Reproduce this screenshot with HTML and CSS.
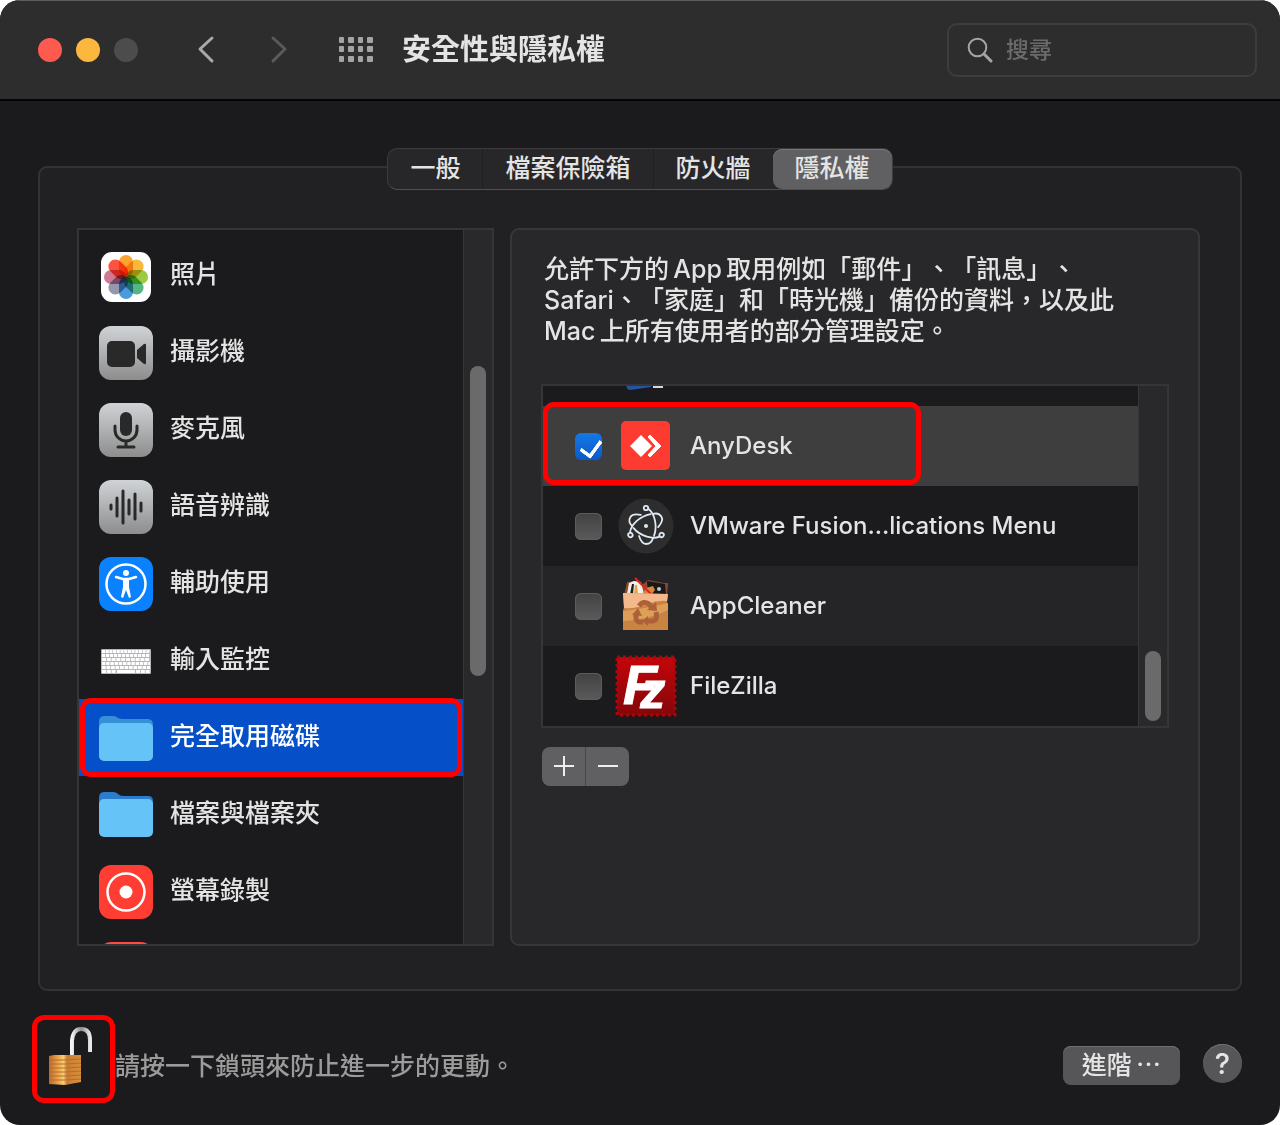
FILE: index.html
```html
<!DOCTYPE html>
<html lang="zh-Hant">
<head>
  <meta charset="UTF-8" />
  <meta name="viewport" content="width=device-width, initial-scale=1.0"/>
  <title>安全性與隱私權</title>
  <link rel="stylesheet" href="styles.css">
</head>
<body>
  <div class="window">
    <header class="titlebar">
      <div class="lights">
        <span class="light red"></span>
        <span class="light yellow"></span>
        <span class="light off"></span>
      </div>
      <div class="nav-buttons">
        <button type="button" class="nav-btn" aria-label="返回">
          <svg width="20" height="30" viewBox="0 0 20 30"><path d="M16 3 L4 14 L16 26" stroke="#a9a9a9"/></svg>
        </button>
        <button type="button" class="nav-btn" aria-label="前進" disabled>
          <svg width="20" height="30" viewBox="0 0 20 30"><path d="M5 3 L17 14 L5 26" stroke="#5a5a5a"/></svg>
        </button>
      </div>
      <button type="button" class="grid-btn" aria-label="顯示全部">
        <svg width="36" height="26" viewBox="0 0 36 26" fill="#a4a4a4">
          <rect x="1" y="0" width="5" height="6" rx="1"/><rect x="10" y="0" width="6" height="6" rx="1"/><rect x="20" y="0" width="5" height="6" rx="1"/><rect x="29" y="0" width="6" height="6" rx="1"/>
          <rect x="1" y="9" width="5" height="6" rx="1"/><rect x="10" y="9" width="6" height="6" rx="1"/><rect x="20" y="9" width="5" height="6" rx="1"/><rect x="29" y="9" width="6" height="6" rx="1"/>
          <rect x="1" y="19" width="5" height="6" rx="1"/><rect x="10" y="19" width="6" height="6" rx="1"/><rect x="20" y="19" width="5" height="6" rx="1"/><rect x="29" y="19" width="6" height="6" rx="1"/>
        </svg>
      </button>
      <h1>安全性與隱私權</h1>
      <label class="search">
        <svg width="26" height="26" viewBox="0 0 26 26" fill="none" stroke="#a5a5a5" stroke-linecap="round">
          <circle cx="10.500" cy="10.500" r="8.800" stroke-width="2"/><path d="M17 17 L24 24" stroke-width="3"/>
        </svg>
        <input type="text" placeholder="搜尋" aria-label="搜尋">
      </label>
    </header>

    <main>
      <div class="tabs">
        <button type="button">一般</button>
        <button type="button">檔案保險箱</button>
        <button type="button">防火牆</button>
        <button type="button" class="active">隱私權</button>
      </div>

      <div class="panel">
        <div class="sidebar">
          <nav class="categories">
            <a href="#photos">
              <svg class="icon" viewBox="0 0 54 54">
                <rect x="2" y="3" width="50" height="50" rx="11" fill="#fff"/>
                <g class="petals">
                  <rect x="20" y="6" width="14" height="22" rx="7" fill="#fba52e"/>
                  <rect x="20" y="6" width="14" height="22" rx="7" fill="#f9b83c" transform="rotate(45 27 28)"/>
                  <rect x="20" y="6" width="14" height="22" rx="7" fill="#9cca40" transform="rotate(90 27 28)"/>
                  <rect x="20" y="6" width="14" height="22" rx="7" fill="#56b583" transform="rotate(135 27 28)"/>
                  <rect x="20" y="6" width="14" height="22" rx="7" fill="#4b9ade" transform="rotate(180 27 28)"/>
                  <rect x="20" y="6" width="14" height="22" rx="7" fill="#9398ae" transform="rotate(225 27 28)"/>
                  <rect x="20" y="6" width="14" height="22" rx="7" fill="#d07895" transform="rotate(270 27 28)"/>
                  <rect x="20" y="6" width="14" height="22" rx="7" fill="#fb5340" transform="rotate(315 27 28)"/>
                </g>
              </svg>
              <span class="name">照片</span>
            </a>
            <a href="#camera">
              <svg class="icon" viewBox="0 0 54 54">
                <defs>
                  <linearGradient id="silver" x1="0" y1="0" x2="0" y2="1">
                    <stop offset="0" stop-color="#d0d3d6"/><stop offset="1" stop-color="#8d8d8d"/>
                  </linearGradient>
                </defs>
                <rect width="54" height="54" rx="12" fill="url(#silver)"/>
                <rect x="8" y="15" width="28" height="26" rx="5" fill="#29292a"/>
                <path d="M38 24 L45 18 Q47 17 47 19 V37 Q47 39 45 38 L38 32 Z" fill="#29292a"/>
              </svg>
              <span class="name">攝影機</span>
            </a>
            <a href="#microphone">
              <svg class="icon" viewBox="0 0 54 54">
                <rect width="54" height="54" rx="12" fill="url(#silver)"/>
                <rect x="21" y="9" width="12" height="24" rx="6" fill="#29292a"/>
                <path d="M16 23 V27 A11 11 0 0 0 38 27 V23 M27 38 V44 M19 44 H35" fill="none" stroke="#29292a" stroke-width="3" stroke-linecap="round"/>
              </svg>
              <span class="name">麥克風</span>
            </a>
            <a href="#speech">
              <svg class="icon" viewBox="0 0 54 54">
                <rect width="54" height="54" rx="12" fill="url(#silver)"/>
                <path d="M12 25 V29 M18 18 V36 M24 11 V43 M30 20 V34 M36 14 V39 M42 23 V31" stroke="#29292a" stroke-width="3" stroke-linecap="round"/>
              </svg>
              <span class="name">語音辨識</span>
            </a>
            <a href="#accessibility">
              <svg class="icon" viewBox="0 0 54 54">
                <rect width="54" height="54" rx="12" fill="#0a82ff"/>
                <circle cx="27" cy="27" r="19.500" fill="none" stroke="#fff" stroke-width="2.500"/>
                <circle cx="27" cy="16" r="3" fill="#fff"/>
                <path d="M17 20 L24 22 H30 L37 20" fill="none" stroke="#fff" stroke-width="2.500" stroke-linecap="round" stroke-linejoin="round"/>
                <path d="M24 22 H30 V30 L32 40 L30 41 L27 33 L24 41 L22 40 L24 30 Z" fill="#fff"/>
              </svg>
              <span class="name">輔助使用</span>
            </a>
            <a href="#input">
              <svg class="icon" viewBox="0 0 54 54">
                <rect x="2" y="15" width="50" height="25" rx="1" fill="#b5b5b5"/>
                <g stroke="#fff" stroke-width="3">
                  <path d="M3 17.500 H51" stroke-dasharray="3 0.700"/>
                  <path d="M3 21.500 H51" stroke-dasharray="3.200 0.800"/>
                  <path d="M3 25.500 H51" stroke-dasharray="4 0.800"/>
                  <path d="M3 29.500 H51" stroke-dasharray="3.400 0.800"/>
                  <path d="M3 33.500 H51" stroke-dasharray="3.700 0.800"/>
                  <path d="M3 37.500 H17 M37 37.500 H51" stroke-dasharray="4 0.800"/>
                  <path d="M18 37.500 H36"/>
                </g>
              </svg>
              <span class="name">輸入監控</span>
            </a>
            <a href="#full-disk" class="selected">
              <svg class="icon" viewBox="0 0 54 54">
                <path d="M0 11 Q0 5 5 5 H14 Q17 5 19 7 Q21 8 24 8 H49 Q54 8 54 14 V20 H0 Z" fill="#3590d6"/>
                <rect y="12" width="54" height="38" rx="5" fill="#65c3f8"/>
              </svg>
              <span class="name">完全取用磁碟</span>
              <span class="mark"></span>
            </a>
            <a href="#files">
              <svg class="icon" viewBox="0 0 54 54">
                <path d="M0 10 Q0 4 5 4 H14 Q17 4 19 6 Q21 8 24 8 H49 Q54 8 54 13 V20 H0 Z" fill="#2a7dcc"/>
                <rect y="11" width="54" height="38" rx="5" fill="#65c3f8"/>
              </svg>
              <span class="name">檔案與檔案夾</span>
            </a>
            <a href="#recording">
              <svg class="icon" viewBox="0 0 54 54">
                <rect width="54" height="54" rx="12" fill="#ff3d33"/>
                <circle cx="27" cy="27" r="18.500" fill="none" stroke="#fff" stroke-width="2.500"/>
                <circle cx="27" cy="27" r="6.500" fill="#fff"/>
              </svg>
              <span class="name">螢幕錄製</span>
            </a>
            <a href="#media" aria-label="媒體">
              <svg class="icon" viewBox="0 0 54 54"><rect width="54" height="54" rx="12" fill="#ff4a45"/></svg>
            </a>
          </nav>
          <div class="track"><div class="thumb"></div></div>
        </div>

        <section class="pane">
          <p>允許下方的&thinsp;App&thinsp;取用例如「郵件」、「訊息」、<br>Safari、「家庭」和「時光機」備份的資料，以及此<br>Mac&thinsp;上所有使用者的部分管理設定。</p>

          <div class="app-box">
            <ul class="apps">
              <li class="plain">
                <svg class="app-icon" viewBox="0 0 62 62">
                  <path d="M11 40 H36 V52 L15 55 Q12 55 11 50 Z" fill="#2355a3"/>
                  <rect x="38" y="50" width="10" height="3" fill="#d8d8d8"/>
                </svg>
              </li>
              <li class="current">
                <input type="checkbox" id="anydesk" checked>
                <label for="anydesk">
                  <svg class="app-icon" viewBox="0 0 62 62">
                    <rect x="6" y="6" width="49" height="49" rx="5" fill="#fe3b30"/>
                    <path d="M15 31 L26 20 L37 31 L26 42 Z" fill="#fff"/>
                    <path d="M33 22 L35 20 L46 31 L35 42 L33 40 L41 31 Z" fill="#fff" stroke="#fff"/>
                  </svg>
                  AnyDesk
                </label>
                <span class="mark"></span>
              </li>
              <li>
                <input type="checkbox" id="vmware">
                <label for="vmware">
                  <svg class="app-icon" viewBox="-31 -31 62 62">
                    <circle r="27.500" fill="#2d2d2e"/>
                    <g fill="none" stroke="#dfe9f2" stroke-width="1.800" stroke-linecap="round">
                      <g id="orbit">
                        <circle cy="-18" r="2.200"/>
                        <path d="M2.500 -17 C8 -13 12 -1 8 10 M-7 10 C-5 16 -2 18 0 18 C3 18 6 16 7 12"/>
                      </g>
                      <use href="#orbit" transform="rotate(120)"/>
                      <use href="#orbit" transform="rotate(240)"/>
                    </g>
                    <circle r="2" fill="#dfe9f2"/>
                  </svg>
                  VMware Fusion...lications Menu
                </label>
              </li>
              <li class="alt">
                <input type="checkbox" id="appcleaner">
                <label for="appcleaner">
                  <svg class="app-icon" viewBox="0 0 62 62">
                    <path d="M9 20 L12 7 L20 6 L27 10 L33 5 L49 8 L53 8 L52 21 Z" fill="#8c4b2c"/>
                    <path d="M14 8 L19 6 L26 7 L29 19 H12 Z" fill="#f1efe9"/>
                    <path d="M15 19 L17 9 L19 9 L18 19 Z" fill="#1f1f22"/>
                    <path d="M32 6 L50 9 L51 19 L33 20 Z" fill="#19191b"/>
                    <path d="M27 20 L31 13 L38 11 L40 15 L36 20 Z" fill="#d6873b"/>
                    <path d="M19 20 L20 10 L22 10 L23 20 Z" fill="#eda13a"/>
                    <path d="M20 3 L37 20" stroke="#d8281f" stroke-width="2"/>
                    <circle cx="44" cy="14" r="2" fill="#bfc7d0"/>
                    <path d="M8 18 L53 19 L52 28 L53 35 V55 H8 V36 L9 32 Z" fill="#c98444"/>
                    <path d="M8 18 L53 19 L52 26 Q42 25 33 29 Q20 34 9 33 Z" fill="#f3b98c"/>
                    <path d="M8 36 Q29 34 53 28 V35 Q33 45 8 46 Z" fill="#dda05b"/>
                    <g fill="none" stroke="#ad6138" stroke-width="5">
                      <path d="M24 31 Q28 25 34 29 L37 33"/>
                      <path d="M41 37 Q43 45 38 46 H32"/>
                      <path d="M28 47 H24 Q19 45 22 38"/>
                    </g>
                    <path d="M32 35 L42 36 L41 27 Z M33 41 V51 L27 46 Z M17 40 L27 41 L23 33 Z" fill="#ad6138"/>
                  </svg>
                  AppCleaner
                </label>
              </li>
              <li>
                <input type="checkbox" id="filezilla">
                <label for="filezilla">
                  <svg class="app-icon stamp" viewBox="0 0 62 62">
                    <defs>
                      <linearGradient id="stamp" x1="0" y1="0" x2="0" y2="1">
                        <stop offset="0" stop-color="#c4060a"/><stop offset="1" stop-color="#84060a"/>
                      </linearGradient>
                    </defs>
                    <rect x="2" y="2" width="58" height="58" fill="url(#stamp)" stroke="#a8080c" stroke-width="3" stroke-dasharray="3 3"/>
                    <text x="8" y="49" font-size="56">F<tspan dx="-17" dy="4" font-size="50">z</tspan></text>
                  </svg>
                  FileZilla
                </label>
              </li>
            </ul>
            <div class="track"><div class="thumb"></div></div>
          </div>

          <div class="add-remove">
            <button type="button" aria-label="加入"><svg width="22" height="22" viewBox="0 0 22 22"><path d="M1 10 H21 M11 0 V20"/></svg></button>
            <button type="button" aria-label="移除"><svg width="22" height="22" viewBox="0 0 22 22"><path d="M1 10 H21"/></svg></button>
          </div>
        </section>
      </div>
    </main>

    <footer>
      <button type="button" class="lock" aria-label="鎖頭">
        <svg width="50" height="62" viewBox="0 0 50 62">
          <defs>
            <linearGradient id="brass">
              <stop offset="0" stop-color="#b8692b"/><stop offset="0.300" stop-color="#eea84a"/><stop offset="0.450" stop-color="#f8cd74"/><stop offset="0.560" stop-color="#c97d34"/><stop offset="1" stop-color="#d9903b"/>
            </linearGradient>
            <linearGradient id="steel">
              <stop offset="0" stop-color="#f4f4f4"/><stop offset="0.500" stop-color="#8d8d8d"/><stop offset="1" stop-color="#e8e8e8"/>
            </linearGradient>
          </defs>
          <path d="M24 32 V16 Q25 4 33 4 Q42 4 42 15 V27" fill="none" stroke="url(#steel)" stroke-width="4"/>
          <path d="M1 31 L6 30 H33 V57 L17 60 L1 59 Z" fill="url(#brass)"/>
          <path d="M1 35 H17 L33 34 M1 39 H17 L33 38 M1 43 H17 L33 42 M1 47 H17 L33 46 M1 51 H17 L33 50 M1 55 H17 L33 54" fill="none" stroke="#b46d33"/>
        </svg>
      </button>
      <span class="hint">請按一下鎖頭來防止進一步的更動。</span>
      <button type="button" class="advanced">進階&thinsp;⋯</button>
      <button type="button" class="help">?</button>
    </footer>
  </div>
</body>
</html>
```
FILE: styles.css
```css
* {
  box-sizing: border-box;
}
body {
  margin: 0;
  background: #fff;
  color: #e4e4e4;
  font-family: Inter, "Noto Sans CJK TC", sans-serif;
  font-size: 25px;
  font-weight: 500;
  text-spacing-trim: space-all;
}
button,
input {
  font: inherit;
  color: inherit;
}
button {
  border: none;
  background: none;
  padding: 0;
}
svg {
  display: block;
  flex: none;
}
.window {
  min-height: 100vh;
  display: flex;
  flex-direction: column;
  background: #1b1b1d;
  border-radius: 20px;
  overflow: hidden;
}

/* title bar */
.titlebar {
  display: flex;
  align-items: center;
  height: 101px;
  padding: 0 23px 0 38px;
  background: #2d2d2d;
  border-top: 1px solid #5e5e5e;
  border-bottom: 2px solid #050505;
}
.lights {
  display: flex;
  gap: 14px;
}
.light {
  width: 24px;
  height: 24px;
  border-radius: 50%;
}
.red {
  background: #ff5a4f;
}
.yellow {
  background: #fcb73e;
}
.off {
  background: #4c4c4c;
}
.nav-buttons {
  display: flex;
  gap: 52px;
  margin-left: 58px;
}
.nav-btn path {
  fill: none;
  stroke-width: 3;
  stroke-linecap: round;
  stroke-linejoin: round;
}
.grid-btn {
  margin-left: 50px;
}
h1 {
  flex: 1;
  margin: 0 0 0 28px;
  font-size: 29px;
  line-height: 40px;
  font-weight: 700;
}
.search {
  display: flex;
  align-items: center;
  gap: 13px;
  width: 310px;
  height: 54px;
  padding: 0 18px;
  border: 2px solid #3d3d3d;
  border-radius: 10px;
}
.search input {
  flex: 1;
  min-width: 0;
  padding: 0;
  border: none;
  outline: none;
  background: none;
  font-size: 23px;
}
.search input::placeholder {
  color: #6b6b6b;
}

/* tabs */
main {
  padding: 47px 38px 0;
}
.tabs {
  position: relative;
  z-index: 1;
  display: flex;
  width: max-content;
  height: 42px;
  margin: 0 auto -24px;
  background: #272729;
  border: 1px solid #3c3c3e;
  border-bottom-color: #505052;
  border-radius: 10px;
}
.tabs button {
  padding: 0 22px 2px;
  line-height: 38px;
  border-left: 1px solid #1f1f21;
}
.tabs button:first-child,
.tabs .active {
  border-left: none;
}
.tabs .active {
  background: #606062;
  border-radius: 9px;
  box-shadow: inset 0 1px #777;
}

/* panel */
.panel {
  display: flex;
  gap: 16px;
  padding: 60px 40px 43px 37px;
  background: #212123;
  border: 2px solid #333335;
  border-radius: 9px;
}
.sidebar {
  display: flex;
  flex: 0 0 417px;
  height: 718px;
  border: 2px solid #353537;
  background: #1b1b1d;
}
.categories {
  flex: 1;
  padding-top: 7px;
  overflow: hidden;
}
.categories a {
  position: relative;
  display: flex;
  align-items: center;
  gap: 17px;
  height: 77px;
  padding-left: 20px;
  color: inherit;
  line-height: 36px;
  text-decoration: none;
}
.categories .selected {
  background: #0550c8;
  color: #fff;
}
.name {
  padding-bottom: 3px;
}
.icon {
  width: 54px;
  height: 54px;
}
.petals rect {
  mix-blend-mode: multiply;
}
.mark {
  position: absolute;
  inset: -1px 1px;
  border: 5px solid #f00;
  border-radius: 11px;
}
.track {
  flex: 0 0 29px;
  display: flex;
  justify-content: center;
  background: #29292b;
  border-left: 1px solid #373739;
}
.thumb {
  width: 16px;
  height: 310px;
  margin-top: 136px;
  background: #6a6a6a;
  border-radius: 8px;
}

/* right pane */
.pane {
  flex: 1;
  min-width: 0;
  padding: 24px 29px;
  background: #28282a;
  border: 2px solid #373739;
  border-radius: 9px;
}
.pane p {
  margin: 0 0 37px 3px;
  line-height: 31px;
}
.app-box {
  display: flex;
  height: 344px;
  border: 2px solid #353537;
  background: #1b1b1d;
}
.apps {
  flex: 1;
  display: flex;
  flex-direction: column;
  justify-content: flex-end;
  margin: 0;
  padding: 0;
  overflow: hidden;
  list-style: none;
  font-size: 24px;
}
.apps li {
  position: relative;
  flex: none;
  display: flex;
  align-items: center;
  gap: 13px;
  height: 80px;
  padding-left: 32px;
}
.apps .current {
  background: #3e3e3f;
}
.apps .alt {
  background: #252527;
}
.apps label {
  display: flex;
  align-items: center;
  gap: 13px;
  line-height: 36px;
}
.apps .plain {
  padding-left: 72px;
}
.apps .mark {
  inset: -4px auto 1px 0;
  width: 378px;
}
.app-icon {
  width: 62px;
  height: 62px;
}
.stamp {
  overflow: visible;
}
.stamp text {
  fill: #fff;
  stroke: #fff;
  font-family: "Liberation Sans", sans-serif;
  font-weight: 700;
  font-style: italic;
}
input[type="checkbox"] {
  appearance: none;
  position: relative;
  width: 27px;
  height: 27px;
  margin: 0;
  border-radius: 6px;
  background: linear-gradient(#424243, #5a5a5b);
  box-shadow: inset 0 0 0 1px #5c5c5d;
}
input[type="checkbox"]:checked {
  background: linear-gradient(#1577e6, #0a5ac9);
  box-shadow: none;
}
input[type="checkbox"]:checked::after {
  content: "";
  position: absolute;
  left: 9px;
  top: 3px;
  width: 10px;
  height: 17px;
  border: solid #fff;
  border-width: 0 4px 4px 0;
  border-radius: 2px;
  transform: rotate(36deg);
}
.app-box .thumb {
  height: 70px;
  margin-top: 265px;
}
.add-remove {
  display: flex;
  width: 87px;
  height: 39px;
  margin: 19px 0 0 1px;
  background: #606062;
  border-radius: 8px;
}
.add-remove button {
  flex: 1;
  display: flex;
  align-items: center;
  justify-content: center;
}
.add-remove button + button {
  border-left: 1px solid #48484a;
}
.add-remove path {
  stroke: #eee;
  stroke-width: 2;
}

/* footer */
footer {
  display: flex;
  align-items: center;
  padding: 24px 38px 22px 32px;
}
.lock {
  width: 83px;
  height: 88px;
  padding-left: 11px;
  padding-bottom: 7px;
  border: 5px solid #f00;
  border-radius: 12px;
}
.hint {
  flex: 1;
  padding-top: 13px;
  color: #9b9b9b;
  line-height: 36px;
}
.advanced {
  height: 39px;
  padding: 0 19px;
  line-height: 36px;
  margin-top: 12px;
  background: #565658;
  border-radius: 8px;
  box-shadow: inset 0 1px #707072;
}
.help {
  width: 39px;
  height: 39px;
  margin: 9px 0 0 23px;
  background: #565658;
  border-radius: 50%;
  box-shadow: inset 0 1px #707072;
  font-size: 29px;
  line-height: 38px;
}
```
